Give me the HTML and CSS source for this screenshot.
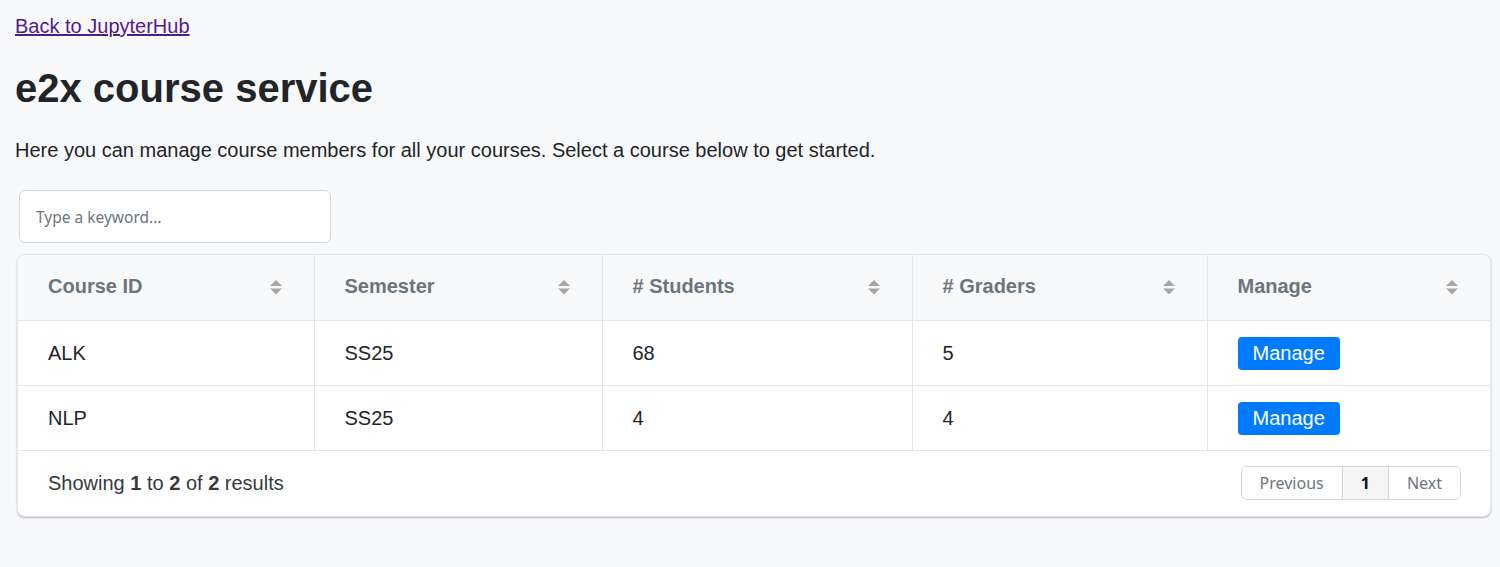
FILE: index.html
```html
<!DOCTYPE html>
<html lang="en">
<head>
<meta charset="utf-8">
<title>e2x course service</title>
<link rel="stylesheet" href="styles.css">
</head>
<body>
<div class="page">
  <div class="back"><a href="#">Back to JupyterHub</a></div>
  <h1 class="title">e2x course service</h1>
  <p class="intro">Here you can manage course members for all your courses. Select a course below to get started.</p>

  <div class="dt-top">
    <input class="dt-search" type="text" placeholder="Type a keyword...">
  </div>

  <div class="card">
    <table class="dt-table">
      <colgroup>
        <col class="c1"><col class="c2"><col class="c3"><col class="c4"><col class="c5">
      </colgroup>
      <thead>
        <tr>
          <th><div class="th-in"><span>Course ID</span><svg class="sort" width="12" height="15" viewBox="0 0 12 15"><polygon points="6,0 12,6 0,6"/><polygon points="0,8.5 12,8.5 6,14.5"/></svg></div></th>
          <th><div class="th-in"><span>Semester</span><svg class="sort" width="12" height="15" viewBox="0 0 12 15"><polygon points="6,0 12,6 0,6"/><polygon points="0,8.5 12,8.5 6,14.5"/></svg></div></th>
          <th><div class="th-in"><span># Students</span><svg class="sort" width="12" height="15" viewBox="0 0 12 15"><polygon points="6,0 12,6 0,6"/><polygon points="0,8.5 12,8.5 6,14.5"/></svg></div></th>
          <th><div class="th-in"><span># Graders</span><svg class="sort" width="12" height="15" viewBox="0 0 12 15"><polygon points="6,0 12,6 0,6"/><polygon points="0,8.5 12,8.5 6,14.5"/></svg></div></th>
          <th><div class="th-in"><span>Manage</span><svg class="sort" width="12" height="15" viewBox="0 0 12 15"><polygon points="6,0 12,6 0,6"/><polygon points="0,8.5 12,8.5 6,14.5"/></svg></div></th>
        </tr>
      </thead>
      <tbody>
        <tr>
          <td>ALK</td>
          <td>SS25</td>
          <td>68</td>
          <td>5</td>
          <td><a class="btn" href="#">Manage</a></td>
        </tr>
        <tr>
          <td>NLP</td>
          <td>SS25</td>
          <td>4</td>
          <td>4</td>
          <td><a class="btn" href="#">Manage</a></td>
        </tr>
      </tbody>
    </table>
    <div class="dt-bottom">
      <div class="dt-info">Showing <b>1</b> to <b>2</b> of <b>2</b> results</div>
      <ul class="pager">
        <li><a href="#">Previous</a></li>
        <li class="active"><a href="#">1</a></li>
        <li><a href="#">Next</a></li>
      </ul>
    </div>
  </div>
</div>
</body>
</html>
```

FILE: styles.css
```css
* { box-sizing: border-box; }

html, body {
  margin: 0;
  padding: 0;
  background: #f8f9fa;
}

body {
  font-family: "Liberation Sans", Arial, sans-serif;
  font-size: 20px;
  line-height: 30px;
  color: #212529;
}

.page {
  padding: 11px 0 40px 15px;
}

.back {
  line-height: 30px;
}

.back a {
  color: #551a8b;
  text-decoration: underline;
}

.title {
  margin: 23px 0 0 0;
  font-size: 40px;
  line-height: 48px;
  font-weight: 700;
  color: #212529;
}

.intro {
  margin: 23px 0 0 0;
  line-height: 30px;
}

.dt-top {
  margin-top: 25px;
  padding-left: 4px;
}

.dt-search {
  display: block;
  width: 312px;
  height: 53px;
  border: 1px solid #d3d7dc;
  border-radius: 6px;
  background: #fff;
  padding: 0 16px;
  font-family: "Noto Sans", "Open Sans", sans-serif;
  font-size: 15.5px;
  color: #495057;
  outline: none;
}

.dt-search::placeholder {
  color: #6c757d;
}

.card {
  margin: 11px 9px 0 2px;
  background: #fff;
  border: 1px solid #e3e6ea;
  border-radius: 8px;
  box-shadow: 0 1px 2px rgba(0, 0, 0, 0.28);
  overflow: hidden;
}

.dt-table {
  width: 100%;
  table-layout: fixed;
  border-collapse: collapse;
}

.c1 { width: 296px; }
.c2 { width: 288px; }
.c3 { width: 310px; }
.c4 { width: 295px; }

.dt-table th {
  background: #f8f9fa;
  height: 65px;
  padding: 0 32px 3px 30px;
  text-align: left;
  font-weight: 700;
  color: #6c757d;
  border-bottom: 1px solid #e3e6ea;
  border-left: 1px solid #e3e6ea;
  vertical-align: middle;
}

.dt-table th:first-child,
.dt-table td:first-child {
  border-left: none;
}

.th-in {
  display: flex;
  align-items: center;
  justify-content: space-between;
}

.sort {
  display: block;
  fill: #a6a6a6;
  flex: none;
  margin-top: 4px;
}

.dt-table td {
  height: 65px;
  padding: 1px 30px 0 30px;
  border-bottom: 1px solid #e3e6ea;
  border-left: 1px solid #e3e6ea;
  vertical-align: middle;
  color: #212529;
}

.btn {
  display: inline-block;
  background: #007bff;
  color: #fff;
  text-decoration: none;
  border-radius: 4px;
  padding: 5px 15px;
  line-height: 23px;
  vertical-align: middle;
}

.dt-bottom {
  display: flex;
  align-items: center;
  justify-content: space-between;
  height: 65px;
  padding: 0 29px 0 30px;
}

.dt-info {
  color: #343a40;
}

.dt-info b {
  font-weight: 700;
}

.pager {
  display: flex;
  list-style: none;
  margin: 0;
  padding: 0;
  border: 1px solid #d3d7dc;
  border-radius: 6px;
  overflow: hidden;
  font-family: "Noto Sans", "Open Sans", sans-serif;
  font-size: 16px;
}

.pager li + li {
  border-left: 1px solid #d3d7dc;
}

.pager a {
  display: block;
  line-height: 32px;
  padding: 0 18px;
  color: #6c757d;
  text-decoration: none;
  background: #fff;
}

.pager .active a {
  background: #f5f5f5;
  color: #111;
  font-weight: 700;
}
```
